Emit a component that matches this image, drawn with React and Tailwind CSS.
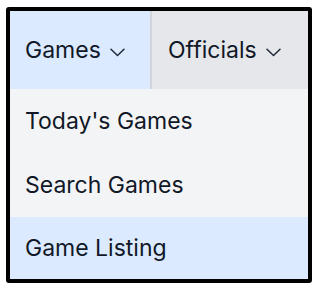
import React from 'react';

function Chevron() {
  return (
    <svg width="15" height="9" viewBox="0 0 15 9" fill="none" className="mt-1">
      <path d="M1 1.2 L7.5 7.5 L14 1.2" stroke="#1f2937" strokeWidth="1.5" strokeLinecap="round" strokeLinejoin="round" />
    </svg>
  );
}

export default function App() {
  const items = ["Today's Games", 'Search Games'];

  return (
    <div className="w-[320px] h-[290px] bg-white pt-[7px] pl-[6px]" style={{ fontFamily: 'Inter, "Noto Sans", sans-serif' }}>
      <div className="w-[306px] h-[276px] border-4 border-black rounded-[3px] flex flex-col text-[#111827] text-[23px] overflow-hidden">
        {/* top nav */}
        <div className="h-[78px] flex">
          <div className="w-[142px] bg-[#dbeafe] border-r-2 border-[#d1d5db] flex items-center pl-[15px] gap-[9px]">
            <span>Games</span>
            <Chevron />
          </div>
          <div className="flex-1 bg-[#e5e7eb] flex items-center pl-[16px] gap-[9px]">
            <span>Officials</span>
            <Chevron />
          </div>
        </div>

        {/* dropdown */}
        <div className="flex-1 flex flex-col bg-[#f3f4f6]">
          {items.map((label) => (
            <div key={label} className="h-16 flex items-center pl-[15px]">
              {label}
            </div>
          ))}
          <div className="flex-1 flex items-center pl-[15px] bg-[#dbeafe]">Game Listing</div>
        </div>
      </div>
    </div>
  );
}
